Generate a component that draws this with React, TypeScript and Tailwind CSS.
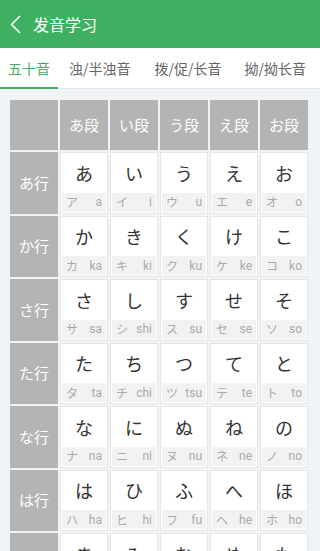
import React from "react";

const cols = ["あ段", "い段", "う段", "え段", "お段"];

const rows: { label: string; cells: [string, string, string][] }[] = [
  {
    label: "あ行",
    cells: [
      ["あ", "ア", "a"],
      ["い", "イ", "i"],
      ["う", "ウ", "u"],
      ["え", "エ", "e"],
      ["お", "オ", "o"],
    ],
  },
  {
    label: "か行",
    cells: [
      ["か", "カ", "ka"],
      ["き", "キ", "ki"],
      ["く", "ク", "ku"],
      ["け", "ケ", "ke"],
      ["こ", "コ", "ko"],
    ],
  },
  {
    label: "さ行",
    cells: [
      ["さ", "サ", "sa"],
      ["し", "シ", "shi"],
      ["す", "ス", "su"],
      ["せ", "セ", "se"],
      ["そ", "ソ", "so"],
    ],
  },
  {
    label: "た行",
    cells: [
      ["た", "タ", "ta"],
      ["ち", "チ", "chi"],
      ["つ", "ツ", "tsu"],
      ["て", "テ", "te"],
      ["と", "ト", "to"],
    ],
  },
  {
    label: "な行",
    cells: [
      ["な", "ナ", "na"],
      ["に", "ニ", "ni"],
      ["ぬ", "ヌ", "nu"],
      ["ね", "ネ", "ne"],
      ["の", "ノ", "no"],
    ],
  },
  {
    label: "は行",
    cells: [
      ["は", "ハ", "ha"],
      ["ひ", "ヒ", "hi"],
      ["ふ", "フ", "fu"],
      ["へ", "ヘ", "he"],
      ["ほ", "ホ", "ho"],
    ],
  },
  {
    label: "ま行",
    cells: [
      ["ま", "マ", "ma"],
      ["み", "ミ", "mi"],
      ["む", "ム", "mu"],
      ["め", "メ", "me"],
      ["も", "モ", "mo"],
    ],
  },
];

function KanaCell({ hira, kata, roma }: { hira: string; kata: string; roma: string }) {
  return (
    <div className="flex h-[61.5px] flex-col border border-[#e6e6e6] bg-white p-[1px]">
      <div className="flex flex-1 items-center justify-center text-[18px] text-[#333]">
        {hira}
      </div>
      <div className="flex h-[19px] items-center justify-between bg-[#f2f2f2] pl-[4px] pr-[4px] text-[12px] leading-none text-[#aaa]">
        <span>{kata}</span>
        <span className="font-['Roboto','Noto_Sans_CJK_JP',sans-serif]">{roma}</span>
      </div>
    </div>
  );
}

export default function App() {
  return (
    <div className="flex h-[551px] w-[320px] flex-col overflow-hidden bg-[#f1f4f7] font-['Noto_Sans_CJK_SC','Noto_Sans_CJK_JP',sans-serif]">
      <header className="flex h-12 shrink-0 items-center bg-[#3fb061] text-white">
        <svg width="33" height="48" viewBox="0 0 33 48" className="shrink-0">
          <polyline
            points="19.5,16.5 11.5,24.5 19.5,32.5"
            fill="none"
            stroke="white"
            strokeWidth="1.7"
            strokeLinecap="round"
            strokeLinejoin="round"
          />
        </svg>
        <h1 className="text-[16px] leading-none">发音学习</h1>
      </header>

      <nav className="relative flex h-[41px] shrink-0 items-center border-b border-[#e6e6e6] bg-white text-[14px] leading-none text-[#666]">
        <span className="px-2 text-[#3fb061]">五十音</span>
        <span className="ml-[11px]">浊/半浊音</span>
        <span className="ml-[24px]">拨/促/长音</span>
        <span className="ml-[23px]">拗/拗长音</span>
        <span className="absolute bottom-[-1px] left-0 h-[2px] w-[58px] bg-[#3fb061]" />
      </nav>

      <main className="flex-1 bg-[radial-gradient(#dfe5ec_0.6px,transparent_0.6px)] bg-[size:4px_4px] px-[10px] pt-[11px]">
        <div className="grid w-[298px] grid-cols-6 gap-[2px] font-['Noto_Sans_CJK_JP',sans-serif]">
          <div className="h-[50px] bg-[#b4b4b4]" />
          {cols.map((c) => (
            <div
              key={c}
              className="flex h-[50px] items-center justify-center bg-[#b4b4b4] text-[15px] text-white"
            >
              {c}
            </div>
          ))}
          {rows.map((r) => (
            <React.Fragment key={r.label}>
              <div className="flex h-[61.5px] items-center justify-center bg-[#b4b4b4] text-[15px] text-white">
                {r.label}
              </div>
              {r.cells.map(([h, k, ro]) => (
                <KanaCell key={h} hira={h} kata={k} roma={ro} />
              ))}
            </React.Fragment>
          ))}
        </div>
      </main>
    </div>
  );
}
